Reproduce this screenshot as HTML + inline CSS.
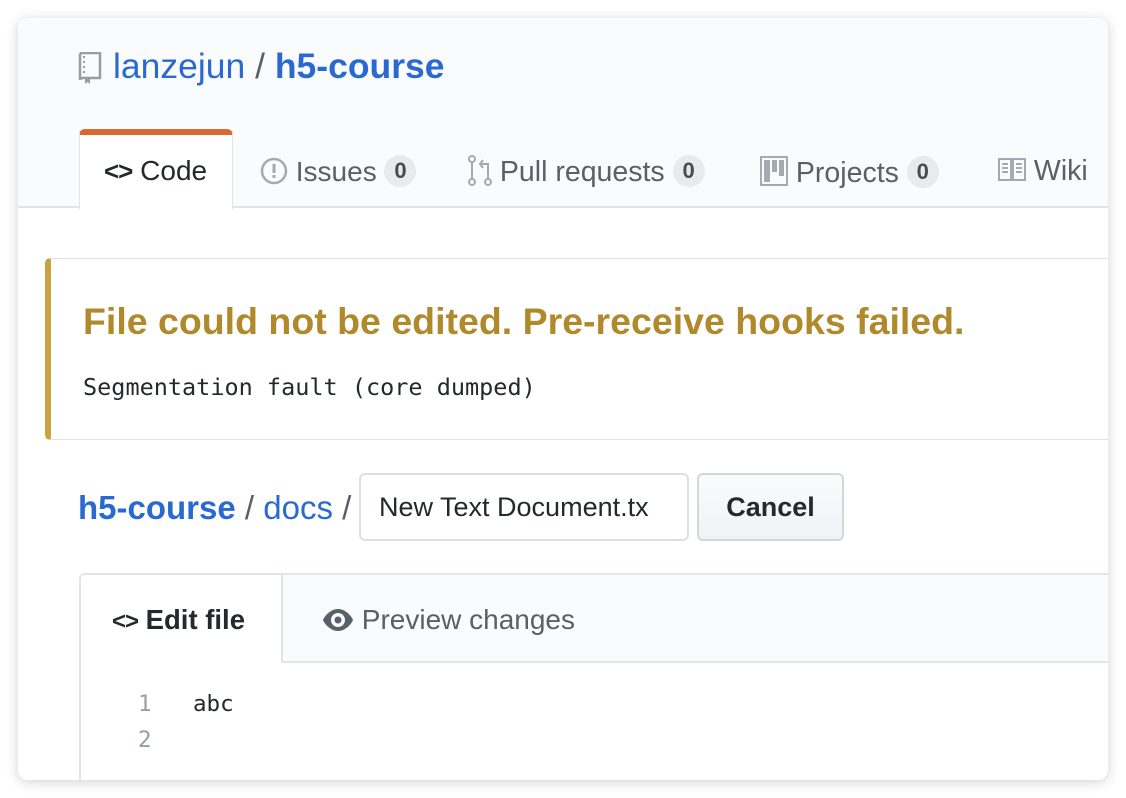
<!DOCTYPE html>
<html><head><meta charset="utf-8"><style>
*{box-sizing:border-box;margin:0;padding:0}
body{width:1126px;height:798px;background:#fff;font-family:"Liberation Sans",Arial,sans-serif;position:relative;overflow:hidden}
.card{position:absolute;left:18px;top:18px;width:1090px;height:762px;border-radius:10px;background:#fff;box-shadow:0 2px 12px rgba(0,0,0,.18);overflow:hidden}
.head{position:absolute;left:0;top:0;width:1090px;height:190px;background:#fafbfc;border-bottom:2px solid #e1e4e8}
.abs{position:absolute;white-space:nowrap}
.blue{color:#2a6ad0}
.tab{position:absolute;font-size:28px;color:#586069;top:137px}
.cnt{display:inline-block;background:#e8eaec;color:#444d56;font-weight:bold;font-size:22px;border-radius:16px;width:32px;height:32px;line-height:32px;text-align:center;vertical-align:3px}
.mono{font-family:"DejaVu Sans Mono","Liberation Mono",monospace}
</style></head><body>
<div class="card">
<div class="head"></div>
<svg class="abs" style="left:60px;top:34px" width="24" height="32" viewBox="0 0 24 32"><path d="M2 3a2 2 0 0 1 2-2h18v25H4a2 2 0 0 0-2 2z" fill="none" stroke="#959da5" stroke-width="2.5"/><path d="M6 4v2M6 9v2M6 14v2M6 19v2" stroke="#959da5" stroke-width="2"/><path d="M7 26v6l2.5-2 2.5 2v-6z" fill="#959da5"/></svg>
<div class="abs" style="left:95px;top:28px;font-size:35.5px;color:#586069"><span class="blue">lanzejun</span> / <b class="blue">h5-course</b></div>
<div class="abs" style="left:61px;top:111px;width:154px;height:81px;background:#fff;border:1px solid #e1e4e8;border-bottom:none;border-top:6px solid #d9692e;border-radius:6px 6px 0 0"></div>
<div class="tab" style="left:86px;color:#24292e"><b style="font-size:26px;letter-spacing:-1px">&lt;&gt;</b> Code</div>
<div class="tab" style="left:242px"><svg width="28" height="28" viewBox="0 0 28 28" style="vertical-align:-4px"><circle cx="14" cy="14" r="12" fill="none" stroke="#a3aab1" stroke-width="2.5"/><rect x="12.5" y="7" width="3" height="9" fill="#a3aab1"/><rect x="12.5" y="18" width="3" height="3" fill="#a3aab1"/></svg> Issues <span class="cnt">0</span></div>
<div class="tab" style="left:450px;font-size:28.5px"><svg width="24" height="32" viewBox="0 0 24 32" style="vertical-align:-6px"><g fill="none" stroke="#a3aab1" stroke-width="2"><circle cx="4" cy="27" r="3"/><circle cx="20" cy="27" r="3"/><circle cx="4" cy="4" r="3"/><path d="M4 7v17M20 24V9h-7M15 5l-3 4 3 4"/></g></svg> Pull requests <span class="cnt">0</span></div>
<div class="tab" style="left:742px;font-size:28.5px"><svg width="28" height="32" viewBox="0 0 28 32" style="vertical-align:-5px"><rect x="1" y="2" width="26" height="28" fill="none" stroke="#a3aab1" stroke-width="2"/><rect x="4" y="5" width="6" height="22" fill="#a3aab1"/><rect x="12" y="5" width="5" height="12" fill="#a3aab1"/><rect x="19" y="5" width="5" height="16" fill="#a3aab1"/></svg> Projects <span class="cnt">0</span></div>
<div class="tab" style="left:980px;font-size:28.5px"><svg width="28" height="26" viewBox="0 0 28 26" style="vertical-align:-3px"><g fill="none" stroke="#a3aab1" stroke-width="2"><rect x="1" y="2" width="12" height="21"/><rect x="15" y="2" width="12" height="21"/><path d="M4 7h6M4 11h6M4 15h6M18 7h6M18 11h6M18 15h6"/></g></svg> Wiki</div>
<div class="abs" style="left:27px;top:240px;width:1080px;height:182px;border:1px solid #dfe2e5;border-left:6px solid #c9a33d;border-radius:5px;background:#fff"></div>
<div class="abs" style="left:65px;top:282px;font-size:37.5px;font-weight:bold;color:#b0892b">File could not be edited. Pre-receive hooks failed.</div>
<div class="abs mono" style="left:65px;top:355px;font-size:23.5px;color:#24292e">Segmentation fault (core dumped)</div>
<div class="abs" style="left:60px;top:471px;font-size:33px;color:#586069"><b class="blue">h5-course</b> / <span class="blue">docs</span> /</div>
<div class="abs" style="left:341px;top:455px;width:330px;height:68px;border:2px solid #dcdfe3;border-radius:6px;background:#fff;font-size:27px;color:#24292e;padding:17px 0 0 18px;overflow:hidden">New Text Document.tx</div>
<div class="abs" style="left:679px;top:455px;width:147px;height:68px;border:2px solid #d3d6da;border-radius:6px;background:linear-gradient(#fafbfc,#eff3f6);font-size:27px;font-weight:bold;color:#24292e;text-align:center;line-height:64px">Cancel</div>
<div class="abs" style="left:61px;top:555px;width:1040px;height:230px;border:2px solid #e1e4e8;border-radius:6px 0 0 0"></div>
<div class="abs" style="left:263px;top:557px;width:840px;height:88px;background:#fafbfc;border-left:2px solid #e1e4e8;border-bottom:2px solid #e1e4e8"></div>
<div class="abs" style="left:94px;top:586px;font-size:27.5px;font-weight:bold;color:#24292e"><span style="font-size:24px;letter-spacing:-1px">&lt;&gt;</span> Edit file</div>
<div class="abs" style="left:304px;top:586px;font-size:28px;color:#586069"><svg width="32" height="24" viewBox="0 0 32 24" style="vertical-align:-3px"><path d="M16 1C8 1 2 9 1 12c1 3 7 11 15 11s14-8 15-11C30 9 24 1 16 1z" fill="#586069"/><circle cx="16" cy="12" r="7" fill="#fafbfc"/><circle cx="16" cy="12" r="3.5" fill="#586069"/></svg> Preview changes</div>
<div class="abs mono" style="left:120px;top:668px;font-size:22.5px;color:#959da5;line-height:36px">1<br>2</div>
<div class="abs mono" style="left:175px;top:668px;font-size:22.5px;color:#24292e;line-height:36px">abc</div>
</div>
</body></html>
